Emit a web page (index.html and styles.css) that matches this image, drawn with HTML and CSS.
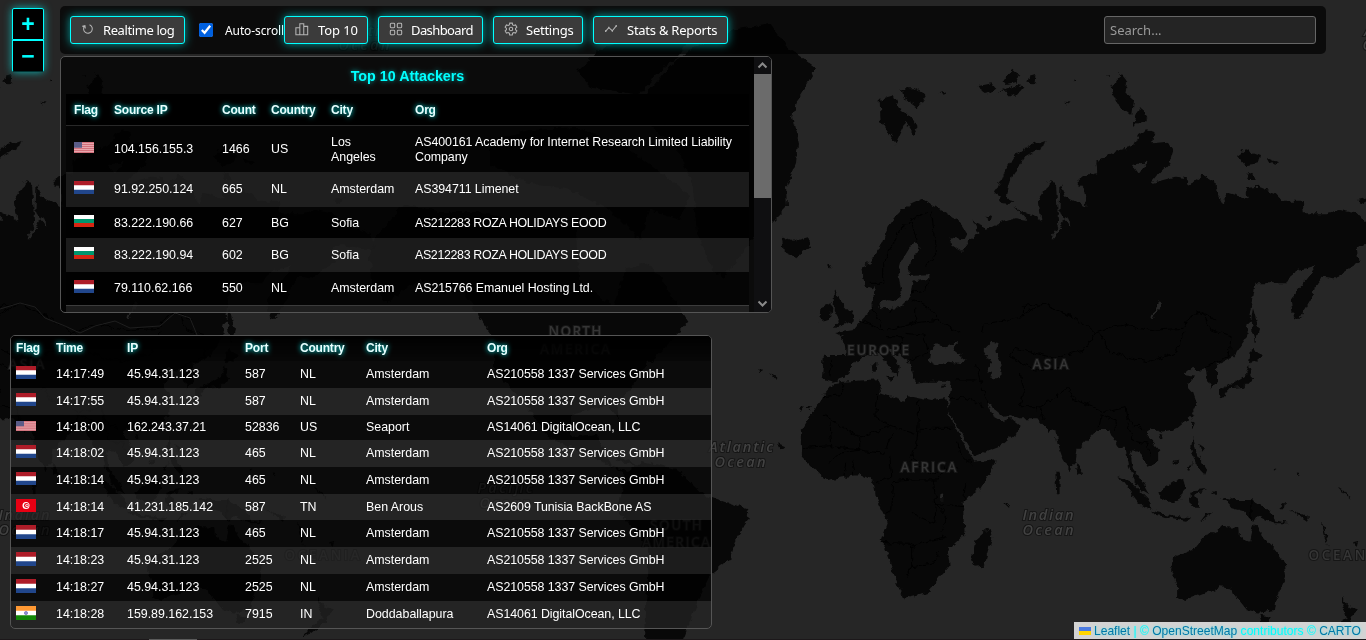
FILE: index.html
```html
<!DOCTYPE html>
<html lang="en">
<head>
<meta charset="utf-8">
<title>Attack map</title>
<link rel="stylesheet" href="styles.css">
</head>
<body>
<svg class="map" viewBox="0 0 1366 640" aria-hidden="true">
  <defs>
    <filter id="coast" x="0" y="0" width="1800" height="640" filterUnits="userSpaceOnUse" color-interpolation-filters="sRGB">
      <feTurbulence type="fractalNoise" baseFrequency="0.16" numOctaves="2" seed="4"/>
      <feDisplacementMap in="SourceGraphic" scale="7" xChannelSelector="R" yChannelSelector="G"/>
    </filter>
    <g id="world">
      <g filter="url(#coast)">
        <g class="land">
          <path transform="translate(7 -38)" d="M362 284 396 242 430 250 476 250 527 266 570 264 572 318 607 345 618 307 640 300 655 318 681 360 655 389 641 401 624 427 610 443 612 459 601 443 564 453 564 475 590 472 604 504 621 510 635 499 669 507 698 533 740 547 743 556 729 576 723 597 703 613 690 640 675 680 638 680 641 585 610 547 618 513 595 499 541 475 519 443 487 408 487 377 456 330 413 318 379 341 365 320Z"/>
          <path d="M693 47 733 30 770 23 787 47 816 68 808 82 800 95 792 117 798 143 796 163 786 187 787 207 772 222 750 243 723 278 713 270 697 233 693 187 680 153 650 125 647 93 673 63Z"/>
          <path d="M577 72 600 50 640 35 690 38 680 55 655 75 640 95 610 90 592 88ZM490 140 530 130 580 128 630 150 690 195 680 220 650 210 640 240 610 210 570 190 520 180 490 165ZM640 466 660 470 655 476 638 472ZM612 455 628 460 640 466 620 462Z"/>
          <g transform="translate(740 0) scale(.3992 .3333)">
            <path d="M312 860 306 800 325 785 350 740 372 680 385 655 410 625 455 600 490 620 520 640 550 665 568 700 560 718 525 712 530 735 555 755 575 720 600 700 585 665 605 675 615 690 650 670 690 655 720 660 688 620 720 640 755 660 748 600 765 570 778 540 792 560 795 620 797 680 780 712 790 712 812 655 830 680 828 660 800 640 803 550 815 590 850 610 868 620 862 570 845 545 860 530 895 520 890 490 940 455 985 440 1000 405 1020 390 1040 400 1035 430 1070 425 1085 450 1075 490 1050 520 1030 550 1090 530 1120 535 1125 555 1160 525 1190 545 1195 580 1208 608 1225 580 1270 595 1265 565 1300 560 1340 580 1360 605 1410 605 1412 640 1470 640 1500 630 1545 640 1568 670 1640 700 1650 750 1568 735 1545 745 1550 790 1520 810 1490 835 1460 830 1440 860 1430 900 1400 960 1385 950 1380 900 1410 850 1445 795 1420 805 1390 810 1370 850 1290 850 1240 915 1290 965 330 965 305 950 335 925 332 885 350 875 360 900 385 900 345 850 330 868Z"/>
            <path d="M105 712 130 725 170 712 178 740 140 772 110 755ZM350 300 385 288 400 330 430 350 445 385 435 405 415 365 390 430 372 400 352 360ZM405 265 440 265 467 285 445 325 410 295ZM765 420 760 440 710 475 680 530 668 590 682 612 655 610 640 580 660 520 690 465 730 435ZM953 220 970 245 965 280 985 300 980 345 945 310 928 265ZM1005 318 1023 355 985 378 990 345ZM1245 465 1265 448 1305 465 1300 490 1265 495ZM1315 470 1348 487 1330 495ZM1275 515 1295 540 1270 540ZM595 258 630 250 640 265 620 280ZM660 240 680 205 700 225 690 250 670 255ZM725 230 740 225 738 250 720 248ZM645 275 690 258 710 262 690 290 665 275ZM915 225 925 225 922 235ZM835 238 845 238 840 245ZM815 305 828 308 822 314ZM615 650 632 645 628 662ZM1545 600 1575 592 1568 610ZM500 280 515 274 510 284ZM220 795 230 795 225 808Z"/>
          </g>
          <g transform="translate(740 300) scale(.3992 .3333)">
            <path d="M1290-60 1275 60 1270 110 1235 170 1195 195 1195 245 1180 265 1170 230 1165 200 1150 215 1135 200 1110 225 1140 230 1120 255 1135 275 1145 310 1130 350 1095 385 1060 395 1030 385 1015 400 1050 450 1050 485 1020 500 1015 480 985 445 978 460 985 510 1010 550 1025 582 1000 565 975 500 965 440 945 440 925 390 895 390 870 420 845 450 840 490 825 510 810 480 795 430 790 390 770 395 760 375 745 355 700 355 680 345 660 350 640 330 620 310 635 350 665 370 675 350 700 375 695 400 650 440 585 470 575 440 540 370 520 330 525 300 530 245 500 245 460 245 440 250 425 190 400 165 370 145 400 200 395 230 350 160 320 165 300 170 280 200 265 235 235 245 205 235 210 165 265 165 260 115 235 100 285 90 305 60 330 30 340-60Z"/>
            <path d="M235 250 260 245 345 238 355 270 350 280 410 305 420 285 480 300 515 295 522 340 570 450 585 485 640 478 635 500 600 570 560 600 565 700 520 750 525 795 500 830 470 880 410 895 385 820 355 720 370 670 340 590 335 545 300 525 260 530 220 540 180 500 155 470 155 390 185 330 205 290 230 255Z"/>
            <path d="M625 683 632 710 610 800 590 803 582 770 590 720ZM1085 770 1080 810 1095 860 1095 895 1115 900 1150 885 1200 862 1230 865 1250 900 1270 930 1300 938 1340 930 1345 890 1368 830 1365 790 1340 750 1310 710 1288 670 1278 725 1250 710 1248 680 1205 678 1190 705 1170 700 1140 745ZM1300 945 1330 950 1320 970 1308 968ZM1505 890 1530 925 1545 930 1530 960 1490 1000 1470 1010 1500 970 1520 955ZM1205 590 1240 600 1275 600 1320 625 1340 660 1375 670 1335 670 1300 650 1280 660 1260 630 1230 620ZM1050 575 1110 530 1115 565 1100 605 1060 605ZM948 528 980 545 1025 600 1028 630 1000 610 970 565ZM1030 632 1100 650 1130 655 1120 662 1040 645ZM1125 575 1165 570 1140 585 1150 620 1130 620ZM1135 410 1145 460 1170 510 1165 525 1145 500 1130 450ZM1280 150 1310 165 1290 185 1275 190ZM1275 195 1283 235 1265 260 1225 265 1205 295 1200 270 1240 245 1265 225ZM1285 25 1300 90 1290 130 1280 70ZM235-30 250 0 285 45 280 65 235 85 250 60 235 30ZM205 20 230 10 225 60 200 65ZM843 490 858 515 848 528 840 510ZM1133 355 1142 370 1132 385ZM1050 400 1062 405 1055 418ZM330 190 342 190 340 215 332 215ZM365 230 385 232 378 242ZM503 258 518 256 508 264ZM1350 625 1368 605 1365 625ZM1380 630 1425 655 1420 665ZM790 515 798 515 798 580 792 580ZM1535 730 1550 725 1548 740ZM1455 670 1465 690 1475 740 1462 705Z"/>
            <path d="M1180 580 1195 575 1190 592ZM1165 645 1185 640 1150 668ZM1085 485 1098 482 1092 495ZM1120 510 1135 485 1128 512ZM1150 435 1162 445 1155 455ZM45 210 55 208 52 216ZM75 215 95 235 90 240ZM145 325 160 322 152 332ZM165 322 180 318 175 330ZM665 612 674 612 670 620ZM1500 560 1510 570 1530 600 1512 580ZM95 430 112 438 102 448ZM1340 505 1346 510 1340 515ZM1395 515 1402 520 1396 526Z"/>
          </g>
        </g>
        <g class="water">
          <g transform="translate(740 0) scale(.3992 .3333)">
            <path d="M345 915 372 900 390 905 405 880 396 820 405 780 425 740 440 728 450 745 425 790 420 828 475 826 474 836 432 845 427 890 400 922 360 925ZM985 495 1000 490 1020 488 1000 520ZM1030 950 1050 905 1055 915 1035 955Z"/>
          </g>
          <g transform="translate(740 300) scale(.3992 .3333)">
            <path d="M475 185 480 150 495 130 515 145 545 125 535 150 565 180 560 190 520 185 490 195ZM610 150 630 125 648 130 640 155 655 190 655 235 635 235 620 210 630 190ZM500 585 512 582 510 598 498 598ZM1030 50 1050 5 1054 10 1035 60Z"/>
          </g>
        </g>
        <g class="border">
          <g transform="translate(740 0) scale(.3992 .3333)"><path d="M325 850 360 850 360 790 400 690 430 660 470 640M430 655 445 725M480 635 485 690 490 760 465 800M425 880 465 870 475 840M430 900 470 920 500 960M705 950 760 910 835 950M1130 950 1150 935 1190 960"/></g>
          <g transform="translate(740 300) scale(.3992 .3333)"><path d="M205 290 250 285 260 255M345 280 340 350 380 380 445 405 448 300M450 385 535 385M210 345 300 412 380 378M225 365 230 440 160 445M300 412 300 450 230 440M300 450 360 460 380 400M445 405 430 480 480 520 545 500M375 470 380 530 345 545M385 545 430 540 500 540 515 500M385 545 380 630 365 640M430 640 485 670 490 610 485 540M355 728 430 730 430 800 415 830M430 740 480 720 520 710M430 800 480 790 500 760M545 425 550 460 585 500M565 550 560 600M490 610 560 620M500 700 520 650 490 610M220 490 250 460 300 450M260 530 265 490M285 525 280 480M605 100 610 70 650 65 710 50 710 20 760 10 830 50 870 80 890 100 860 150 790 175 690 145 675 170 740 210 820 200M890 95 960 75 1040 90 1110 85 1130 45 1160 35 1180 90 1230 110 1225 170 1165 200M900 100 930 160 1020 185 1090 160 1115 95M700 225 710 280 700 320M740 330 780 300 820 260 840 300 910 335 965 320 970 360 1010 390M590 190 610 280 620 310M525 300 560 290 610 320M540 240 590 240M700 320 750 320 760 360M900 380 905 345 940 360 940 390M970 370 985 420 1020 430 1030 470M330 20 360 90 300 60M375 40 380 20M440 20 440 70 370 90M430 70 500 60 550 100M410 100 460 105 470 150M420 180 470 160M365 110 410 110 400 150M230 180 225 230M1280 600 1280 660"/></g>
        </g>
      </g>
      <g class="region" text-anchor="middle">
        <text x="878" y="355" textLength="62">EUROPE</text>
        <text x="1050.500" y="369" textLength="36">ASIA</text>
        <text x="928.500" y="472" textLength="56">AFRICA</text>
        <text x="575" y="336" textLength="53">NORTH</text>
        <text x="575" y="354" textLength="70">AMERICA</text>
        <text x="676" y="530" textLength="52">SOUTH</text>
        <text x="676" y="547" textLength="68">AMERICA</text>
        <text x="1346" y="560" textLength="75">OCEANIA</text>
      </g>
      <g class="ocean" text-anchor="middle">
        <text x="1048" y="520" textLength="51">Indian</text><text x="1048" y="535" textLength="51">Ocean</text>
        <text x="741" y="452" textLength="64">Atlantic</text><text x="740" y="467" textLength="51">Ocean</text>
        <text x="505" y="493" textLength="55">Pacific</text><text x="505" y="508" textLength="51">Ocean</text>
        <text x="1388" y="36" textLength="48">Arctic</text><text x="1388" y="50" textLength="51">Ocean</text>
      </g>
    </g>
    <symbol id="nl" viewBox="0 0 20 14" preserveAspectRatio="none"><path fill="#fff" d="M0 0h20v14H0z"/><path fill="#ae1c28" d="M0 0h20v4.700H0z"/><path fill="#21468b" d="M0 9.300h20V14H0z"/></symbol>
    <symbol id="bg" viewBox="0 0 20 12" preserveAspectRatio="none"><path fill="#fff" d="M0 0h20v4H0z"/><path fill="#00966e" d="M0 4h20v4H0z"/><path fill="#d62612" d="M0 8h20v4H0z"/></symbol>
    <symbol id="us" viewBox="0 0 20 11" preserveAspectRatio="none"><path fill="#e7a6ad" d="M0 0h20v11H0z"/><path stroke="#cf6b76" stroke-width=".9" d="M0 .500h20M0 2.500h20M0 4.500h20M0 6.500h20M0 8.500h20M0 10.500h20"/><path fill="#5a5c88" d="M0 0h8v5.800H0z"/></symbol>
    <symbol id="tn" viewBox="0 0 20 13" preserveAspectRatio="none"><path fill="#e70013" d="M0 0h20v13H0z"/><circle cx="10" cy="6.500" r="3.500" fill="#fff"/><circle cx="10.400" cy="6.500" r="2.400" fill="#e70013"/><circle cx="10.900" cy="6.500" r="1.600" fill="#fff"/><circle cx="11" cy="6.500" r=".8" fill="#e70013"/></symbol>
    <symbol id="in" viewBox="0 0 20 14" preserveAspectRatio="none"><path fill="#fff" d="M0 0h20v14H0z"/><path fill="#f93" d="M0 0h20v4.700H0z"/><path fill="#128807" d="M0 9.300h20V14H0z"/><circle cx="10" cy="7" r="1.600" fill="#8e8ece" stroke="#5b5bb0" stroke-width=".6"/></symbol>
  </defs>
  <rect class="sea" width="1366" height="640"/>
  <use href="#world"/>
  <use href="#world" x="-1024"/>
  <path class="faint" d="M0 309 20 303 35 307 45 318 65 326 80 333 95 326 115 321 130 328 160 326 175 313 190 318 197 335"/>
</svg>

<div class="zoom-control"><button>+</button><button>−</button></div>

<main class="page">
  <header class="toolbar">
    <button class="btn log"><svg class="icon" viewBox="0 0 16 16"><path d="M4.300 4.400A5 5 0 1 0 9.800 3.200M1.500 5l3-.8.500 3.200"/></svg>Realtime log</button>
    <label class="auto"><input type="checkbox" checked><span>Auto-scroll</span></label>
    <button class="btn top"><svg class="icon" viewBox="0 0 16 16"><path d="M1 6.500h4.500v8H1zM5.500 2h4.500v12.500H5.500zM10 5h4.500v9.500H10z"/></svg>Top 10</button>
    <button class="btn dash"><svg class="icon" viewBox="0 0 16 16"><rect x="1.500" y="1.500" width="5" height="5" rx="1"/><rect x="9.500" y="1.500" width="5" height="5" rx="1"/><rect x="1.500" y="9.500" width="5" height="5" rx="1"/><rect x="9.500" y="9.500" width="5" height="5" rx="1"/></svg>Dashboard</button>
    <button class="btn set"><svg class="icon" viewBox="0 0 16 16"><circle cx="8" cy="8" r="2"/><path d="M6.500 1.300h3l.4 2 1.300.7 2-.6 1.500 2.500-1.500 1.400v1.500l1.500 1.400-1.500 2.500-2-.6-1.300.7-.4 2h-3l-.4-2-1.300-.7-2 .6-1.500-2.500 1.500-1.400V7.300L1.300 5.900l1.500-2.500 2 .6 1.300-.7z"/></svg>Settings</button>
    <button class="btn stats"><svg class="icon" viewBox="0 0 16 16"><path d="M2 10.500 5.500 6.500l4 3.500L14 4.500"/><path d="M1.200 10.500h1.400M4.800 6.500h1.400M8.800 10h1.400M13.300 4.500h1.400" stroke-width="2"/></svg>Stats &amp; Reports</button>
    <input class="search" type="text" placeholder="Search...">
  </header>

  <section class="panel top-panel">
    <div class="top-body">
      <h2>Top 10 Attackers</h2>
      <div class="top-table">
        <div class="row head"><span>Flag</span><span>Source IP</span><span>Count</span><span>Country</span><span>City</span><span>Org</span></div>
        <div class="row tall"><svg class="flag f11"><use href="#us"/></svg><span>104.156.155.3</span><span>1466</span><span>US</span><span>Los<br>Angeles</span><span class="org">AS400161 Academy for Internet Research Limited Liability Company</span></div>
        <div class="row r35 alt"><svg class="flag f13"><use href="#nl"/></svg><span>91.92.250.124</span><span>665</span><span>NL</span><span>Amsterdam</span><span class="org">AS394711 Limenet</span></div>
        <div class="row r31"><svg class="flag f12"><use href="#bg"/></svg><span>83.222.190.66</span><span>627</span><span>BG</span><span>Sofia</span><span class="org caps">AS212283 ROZA HOLIDAYS EOOD</span></div>
        <div class="row r34 alt"><svg class="flag f12"><use href="#bg"/></svg><span>83.222.190.94</span><span>602</span><span>BG</span><span>Sofia</span><span class="org caps">AS212283 ROZA HOLIDAYS EOOD</span></div>
        <div class="row r33"><svg class="flag f13"><use href="#nl"/></svg><span>79.110.62.166</span><span>550</span><span>NL</span><span>Amsterdam</span><span class="org">AS215766 Emanuel Hosting Ltd.</span></div>
        <div class="row next alt"></div>
      </div>
    </div>
    <div class="scrollbar">
      <svg viewBox="0 0 17 17"><path d="M4.500 10.500l4-4 4 4"/></svg>
      <div class="thumb"></div>
      <svg viewBox="0 0 17 17"><path d="M4.500 6.500l4 4 4-4"/></svg>
    </div>
  </section>

  <section class="panel live">
    <div class="line head"><span>Flag</span><span>Time</span><span>IP</span><span>Port</span><span>Country</span><span>City</span><span>Org</span></div>
    <div class="line"><svg class="flag f13"><use href="#nl"/></svg><span>14:17:49</span><span>45.94.31.123</span><span>587</span><span>NL</span><span>Amsterdam</span><span class="org">AS210558 1337 Services GmbH</span></div>
    <div class="line alt"><svg class="flag f13"><use href="#nl"/></svg><span>14:17:55</span><span>45.94.31.123</span><span>587</span><span>NL</span><span>Amsterdam</span><span class="org">AS210558 1337 Services GmbH</span></div>
    <div class="line l25"><svg class="flag f10"><use href="#us"/></svg><span>14:18:00</span><span>162.243.37.21</span><span>52836</span><span>US</span><span>Seaport</span><span class="org">AS14061 DigitalOcean, LLC</span></div>
    <div class="line alt"><svg class="flag f13"><use href="#nl"/></svg><span>14:18:02</span><span>45.94.31.123</span><span>465</span><span>NL</span><span>Amsterdam</span><span class="org">AS210558 1337 Services GmbH</span></div>
    <div class="line"><svg class="flag f13"><use href="#nl"/></svg><span>14:18:14</span><span>45.94.31.123</span><span>465</span><span>NL</span><span>Amsterdam</span><span class="org">AS210558 1337 Services GmbH</span></div>
    <div class="line alt l26"><svg class="flag f13"><use href="#tn"/></svg><span>14:18:14</span><span>41.231.185.142</span><span>587</span><span>TN</span><span>Ben Arous</span><span class="org">AS2609 Tunisia BackBone AS</span></div>
    <div class="line"><svg class="flag f14"><use href="#nl"/></svg><span>14:18:17</span><span>45.94.31.123</span><span>465</span><span>NL</span><span>Amsterdam</span><span class="org">AS210558 1337 Services GmbH</span></div>
    <div class="line alt"><svg class="flag f14"><use href="#nl"/></svg><span>14:18:23</span><span>45.94.31.123</span><span>2525</span><span>NL</span><span>Amsterdam</span><span class="org">AS210558 1337 Services GmbH</span></div>
    <div class="line"><svg class="flag f14"><use href="#nl"/></svg><span>14:18:27</span><span>45.94.31.123</span><span>2525</span><span>NL</span><span>Amsterdam</span><span class="org">AS210558 1337 Services GmbH</span></div>
    <div class="line alt"><svg class="flag f14"><use href="#in"/></svg><span>14:18:28</span><span>159.89.162.153</span><span>7915</span><span>IN</span><span>Doddaballapura</span><span class="org">AS14061 DigitalOcean, LLC</span></div>
  </section>
</main>

<footer class="attribution"><svg viewBox="0 0 12 8"><path fill="#4c7be1" d="M0 0h12v4H0z"/><path fill="#ffd500" d="M0 4h12v4H0z"/></svg><a>Leaflet</a> | © <a>OpenStreetMap</a> contributors © <a>CARTO</a></footer>
<div class="page-scroll"><div></div></div>
</body>
</html>
```
FILE: styles.css
```css
* { box-sizing: border-box; }
body {
  margin: 0;
  width: 1366px;
  height: 640px;
  overflow: hidden;
  position: relative;
  background: #262626;
  color: #fff;
  font: 13px/15px "Liberation Sans", Arial, sans-serif;
}
button, input { font-family: inherit; }

.map { position: absolute; inset: 0; width: 1366px; height: 640px; }
.sea, .water { fill: #262626; }
.land { fill: #080808; }
.border path { fill: none; stroke: #000; stroke-width: 1; vector-effect: non-scaling-stroke; }
.faint { fill: none; stroke: #1f1f1f; }
.map text {
  font-family: "Open Sans", "Noto Sans", sans-serif;
  font-weight: 600;
  fill: #353535;
  stroke: #161616;
  stroke-width: 2px;
  paint-order: stroke;
}
.region text { font-size: 13.500px; }
.ocean text { font-size: 14.500px; font-style: italic; fill: #424242; }

.zoom-control {
  position: absolute;
  left: 12px;
  top: 8px;
  width: 32px;
  height: 64px;
  border-radius: 3px;
  box-shadow: 0 0 8px rgba(0, 255, 255, .65);
}
.zoom-control button {
  display: block;
  width: 32px;
  height: 32px;
  padding: 0;
  background: #000;
  border: 1px solid #0ff;
  border-radius: 2px 2px 0 0;
  color: #0ff;
  font: bold 23px/29px "Liberation Sans", Arial, sans-serif;
}
.zoom-control button + button { border-radius: 0 0 2px 2px; border-bottom-color: #033; }

.page { position: relative; padding: 6px 40px 0 10px; }

.toolbar {
  display: flex;
  align-items: center;
  height: 48px;
  margin-left: 50px;
  padding: 0 10px;
  border-radius: 5px;
  background: rgba(0, 0, 0, .7);
  font-family: "Noto Sans", sans-serif;
}
.btn {
  display: flex;
  align-items: center;
  flex: none;
  height: 28px;
  padding: 0 0 0 10px;
  margin-right: 10px;
  border: 1px solid #0ff;
  border-radius: 3px;
  background: #3b3b3b;
  color: #fff;
  font-size: 13px;
  line-height: 18px;
  letter-spacing: -.25px;
  white-space: nowrap;
  box-shadow: 0 0 10px rgba(0, 255, 255, .6);
}
.icon {
  width: 14px;
  height: 14px;
  margin: 0 8px 3px 0;
  fill: none;
  stroke: #b4b4b4;
  stroke-width: 1.200;
}
.log { width: 115px; margin-right: 14px; letter-spacing: -.4px; }
.top { width: 84px; letter-spacing: -.1px; }
.top .icon { margin-right: 9px; }
.dash { width: 105px; letter-spacing: -.6px; }
.set { width: 90px; }
.stats { width: 135px; }
.stats .icon { margin-right: 9px; }
.auto { display: flex; align-items: center; width: 85px; white-space: nowrap; font-size: 12px; letter-spacing: -.1px; }
.auto input { width: 14px; height: 14px; margin: 0 12px 0 0; flex: none; accent-color: #0060df; }
.search {
  width: 212px;
  height: 28px;
  margin-left: auto;
  padding: 0 5px;
  border: 1px solid #666;
  border-radius: 3px;
  background: #242424;
  color: #fff;
  font-size: 13px;
}
.search::placeholder { color: #999; }

.panel { border: 1px solid #555; border-radius: 5px; overflow: hidden; background: rgba(0, 0, 0, .7); }
.top-panel { display: flex; width: 712px; height: 257px; margin: 2px 0 0 50px; }
.top-body { width: 693px; padding: 0 5px; }
.top-body h2 {
  margin: 0;
  height: 37px;
  font-size: 14.300px;
  line-height: 38px;
  text-align: center;
  color: #0ff;
  text-shadow: 0 0 5px rgba(0, 255, 255, .6);
}
.top-table { background: rgba(0, 0, 0, .5); width: 683px; }
.row {
  display: grid;
  grid-template-columns: 40px 108px 49px 60px 84px 1fr;
  align-items: center;
  padding: 0 8px;
}
.row.head { height: 32px; padding-top: 2px; background: #000; border-bottom: 1px solid #282828; }
.head {
  font-weight: bold;
  font-size: 12px;
  letter-spacing: -.2px;
  text-shadow: 0 0 5px #0ff;
  color: #e8ffff;
}
.tall { height: 46px; padding-top: 1px; }
.r35 { height: 35px; }
.r34 { height: 34px; }
.r33 { height: 33px; }
.r31 { height: 31px; padding-top: 1px; }
.next { height: 8px; border-top: 1px solid #3c3c3c; }
.alt { background: rgba(255, 255, 255, .1); }
.row:not(.head), .line:not(.head) { font-size: 12.400px; }
.org { letter-spacing: -.06px; }
.caps { letter-spacing: -.33px; }

.flag { display: block; width: 20px; margin-bottom: 4px; }
.f10 { height: 10px; }
.f11 { height: 11px; }
.f12 { height: 12px; }
.f13 { height: 13px; }
.f14 { height: 14px; }

.scrollbar { width: 17px; background: #0f0f11; }
.scrollbar svg { display: block; width: 17px; height: 17px; fill: none; stroke: #8a8a8a; stroke-width: 2; }
.scrollbar .thumb { height: 124px; margin-bottom: 97px; background: #6b6b6b; }

.live { width: 702px; height: 294px; margin-top: 22px; }
.line {
  display: grid;
  grid-template-columns: 40px 71px 118px 55px 66px 121px 1fr;
  align-items: center;
  height: 27px;
  padding-left: 5px;
}
.line.head { height: 25px; background: linear-gradient(rgba(0, 0, 0, .9), rgba(0, 0, 0, .3)); }
.l25 { height: 25px; }
.l26 { height: 26px; }

.attribution {
  position: absolute;
  right: 0;
  bottom: 1px;
  width: 292px;
  height: 17px;
  padding-left: 5px;
  background: rgba(255, 255, 255, .8);
  color: #0ff;
  font-size: 12.050px;
  line-height: 18px;
  white-space: nowrap;
  text-shadow: 0 0 3px rgba(0, 255, 255, .5);
}
.attribution a { color: #0078a8; }
.attribution svg { width: 12px; height: 8px; margin-right: 3px; }

.page-scroll { position: absolute; left: 0; right: 0; bottom: 0; height: 1px; background: #1c181a; }
.page-scroll div { width: 48px; height: 1px; margin-left: 149px; background: #5a5a5a; }
```
